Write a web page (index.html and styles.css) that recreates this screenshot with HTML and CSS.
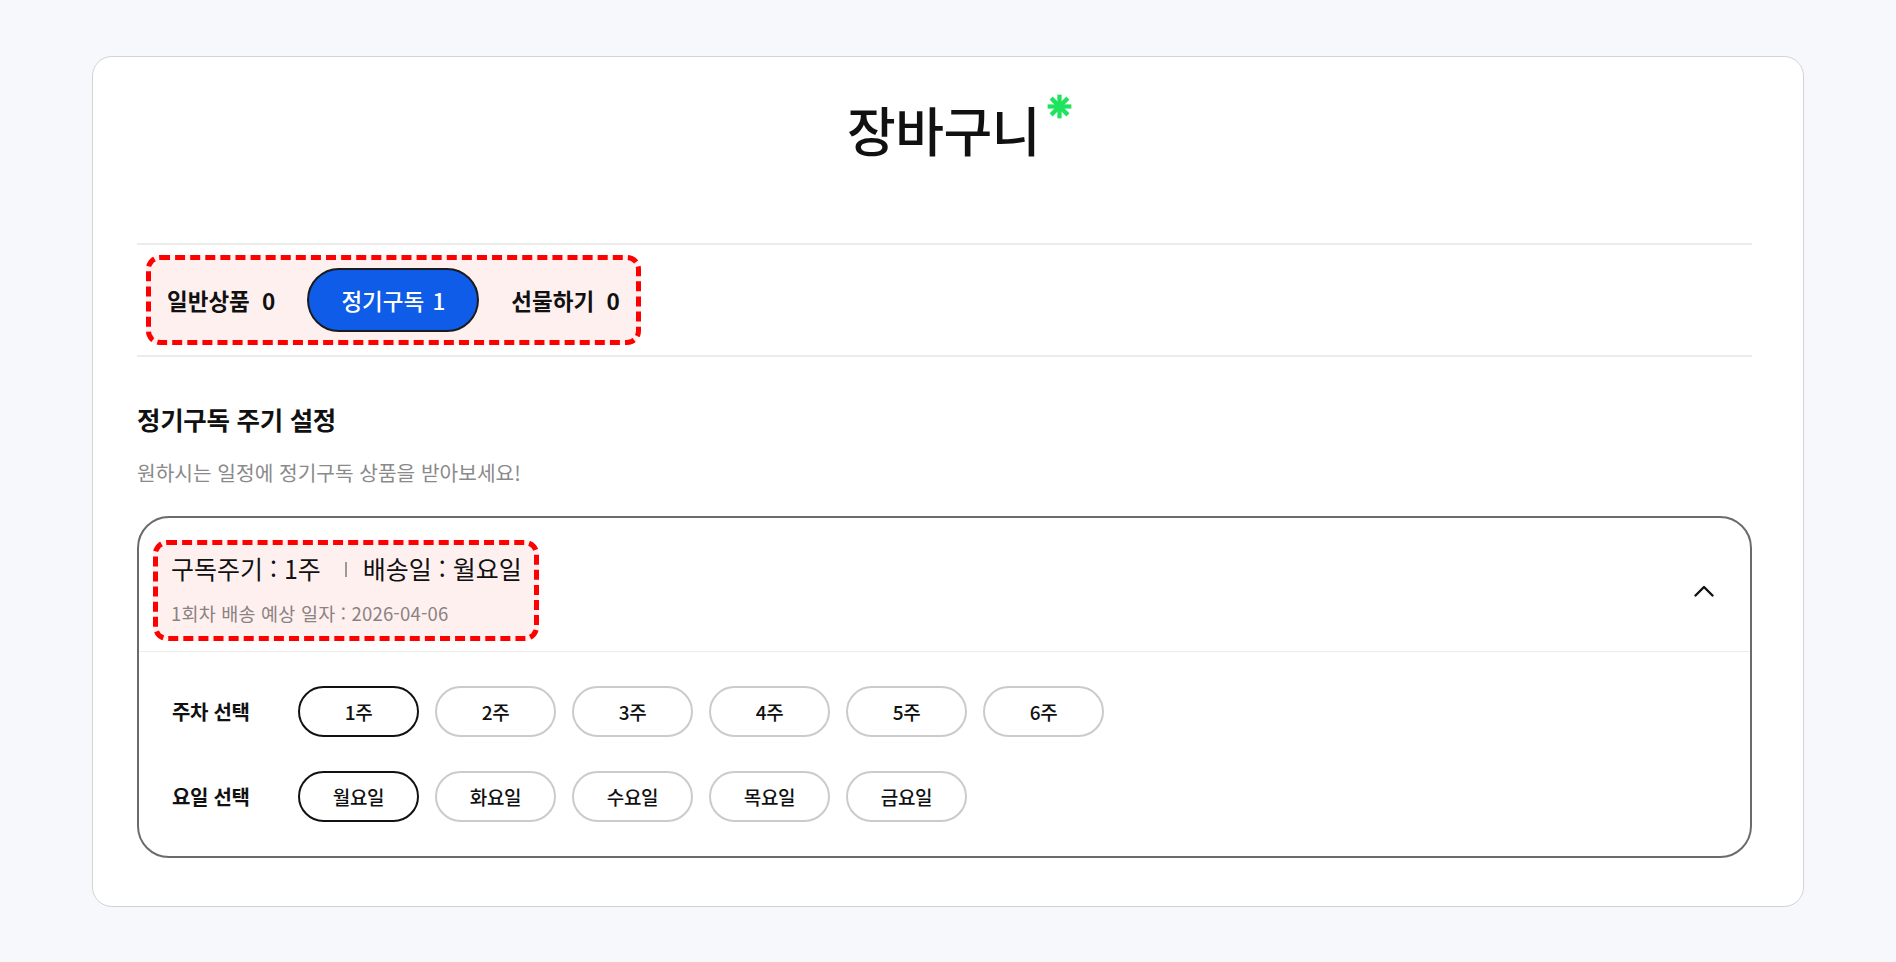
FILE: index.html
```html
<!DOCTYPE html>
<html lang="ko">
<head>
<meta charset="utf-8">
<title>장바구니</title>
<link rel="stylesheet" href="styles.css">
</head>
<body>
<div class="page">
  <main class="card">
    <h1 class="title">장바구니<svg class="asterisk" viewBox="0 0 20 20" width="25" height="25" aria-hidden="true"><g stroke="#1ee35d" stroke-width="3.4" stroke-linecap="butt"><line x1="10" y1="0.5" x2="10" y2="19.5"/><line x1="0.5" y1="10" x2="19.5" y2="10"/><line x1="3.3" y1="3.3" x2="16.7" y2="16.7"/><line x1="16.7" y1="3.3" x2="3.3" y2="16.7"/></g></svg></h1>

    <nav class="tab-row">
      <div class="tabs">
        <span class="tab">일반상품 0</span>
        <span class="tab tab-active">정기구독 1</span>
        <span class="tab">선물하기 0</span>
      </div>
    </nav>

    <section class="section">
      <h2 class="section-title">정기구독 주기 설정</h2>
      <p class="section-desc">원하시는 일정에 정기구독 상품을 받아보세요!</p>

      <div class="sub-box">
        <div class="sub-header">
          <div class="sub-info">
            <div class="sub-summary">구독주기 : 1주<span class="sep"></span>배송일 : 월요일</div>
            <div class="sub-date">1회차 배송 예상 일자 : 2026-04-06</div>
          </div>
          <svg class="chevron" viewBox="0 0 20 12" width="20" height="12" aria-hidden="true"><polyline points="1.5,10.5 10,2 18.5,10.5" fill="none" stroke="#111" stroke-width="2.4" stroke-linecap="round" stroke-linejoin="round"/></svg>
        </div>
        <div class="sub-body">
          <div class="opt-row">
            <span class="opt-label">주차 선택</span>
            <div class="opt-list">
              <button class="opt opt-active">1주</button>
              <button class="opt">2주</button>
              <button class="opt">3주</button>
              <button class="opt">4주</button>
              <button class="opt">5주</button>
              <button class="opt">6주</button>
            </div>
          </div>
          <div class="opt-row">
            <span class="opt-label">요일 선택</span>
            <div class="opt-list">
              <button class="opt opt-active">월요일</button>
              <button class="opt">화요일</button>
              <button class="opt">수요일</button>
              <button class="opt">목요일</button>
              <button class="opt">금요일</button>
            </div>
          </div>
        </div>
      </div>
    </section>
  </main>
</div>
</body>
</html>
```

FILE: styles.css
```css
* {
  box-sizing: border-box;
}

html, body {
  margin: 0;
  padding: 0;
  background: #f7f8fc;
}

body {
  font-family: "Noto Sans CJK KR", "Noto Sans", sans-serif;
  color: #111;
}

.page {
  padding: 56px 92px;
}

.card {
  background: #fff;
  border: 1px solid #d2d3d8;
  border-radius: 20px;
  padding: 39px 51px 48px 44px;
}

.title {
  margin: 0;
  padding-left: 30px;
  text-align: center;
  font-size: 53px;
  line-height: 67px;
  font-weight: 500;
  letter-spacing: -0.5px;
  color: #111;
}

.asterisk {
  vertical-align: top;
  margin-top: -2px;
  margin-left: 7px;
}

.tab-row {
  margin-top: 80px;
  border-top: 2px solid #ececec;
  border-bottom: 2px solid #ececec;
  padding: 10px 0 10px 9px;
}

.tabs {
  display: inline-flex;
  align-items: center;
  gap: 16px;
  border: 5px dashed #ff0000;
  border-radius: 14px;
  background: #fff0f0;
  padding: 8px 0;
}

.tab {
  display: inline-flex;
  align-items: center;
  height: 64px;
  padding: 0 16px;
  font-size: 22.5px;
  font-weight: 700;
  color: #111;
  word-spacing: 6px;
}

.tab-active {
  padding: 0 32px;
  background: #0f5ce8;
  border: 2px solid #1b1b1b;
  border-radius: 32px;
  color: #fff;
  font-weight: 500;
  word-spacing: 2px;
}

.section-title {
  margin: 46px 0 0;
  font-size: 25.5px;
  line-height: 32px;
  font-weight: 700;
  letter-spacing: -0.3px;
}

.section-desc {
  margin: 24px 0 0;
  font-size: 20.3px;
  line-height: 26px;
  color: #8a8a8a;
}

.sub-box {
  margin-top: 31px;
  border: 2px solid #6b6b6b;
  border-radius: 32px;
  overflow: hidden;
}

.sub-header {
  display: flex;
  align-items: center;
  justify-content: space-between;
  padding: 22px 36px 10px 14px;
  border-bottom: 1.5px solid #ededed;
}

.sub-info {
  border: 5px dashed #ff0000;
  border-radius: 14px;
  background: #fff0f0;
  padding: 7px 12px 11px 13px;
}

.sub-summary {
  display: flex;
  align-items: center;
  font-size: 25px;
  line-height: 33px;
  font-weight: 400;
  color: #111;
}

.sep {
  display: inline-block;
  width: 2px;
  height: 15px;
  background: #9a9a9a;
  margin: 2px 16px 0 24px;
}

.sub-date {
  margin-top: 16px;
  font-size: 18.5px;
  line-height: 24px;
  color: #8b8282;
  letter-spacing: 0.2px;
}

.chevron {
  display: block;
  margin-top: 0;
}

.sub-body {
  display: flex;
  flex-direction: column;
  gap: 34px;
  padding: 34px 33px 34px;
}

.opt-row {
  display: flex;
  align-items: center;
}

.opt-label {
  width: 126px;
  font-size: 20px;
  font-weight: 700;
  letter-spacing: -0.3px;
}

.opt-list {
  display: flex;
  gap: 16px;
}

.opt {
  width: 121px;
  height: 51px;
  border: 2px solid #cbcbcb;
  border-radius: 26px;
  background: #fff;
  font-family: inherit;
  font-size: 19px;
  font-weight: 500;
  color: #111;
  padding: 0;
  letter-spacing: -0.3px;
}

.opt-active {
  border-color: #111;
}
```
